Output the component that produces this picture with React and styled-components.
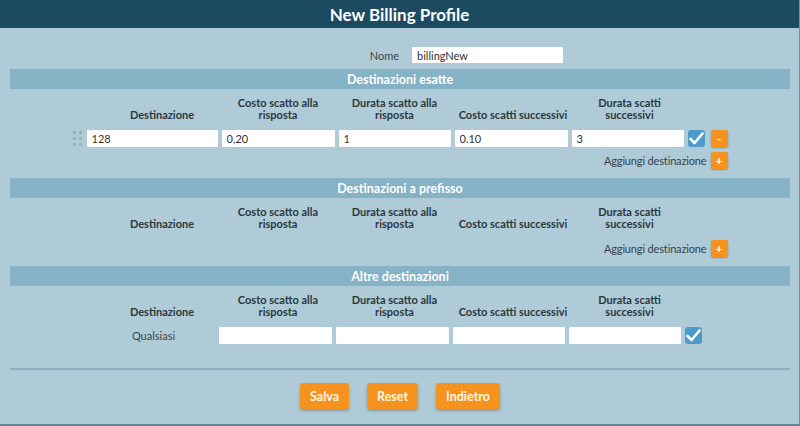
import React from "react";
import styled, { createGlobalStyle } from "styled-components";

const GlobalStyle = createGlobalStyle`
  html, body { margin: 0; padding: 0; }
  body { font-family: Lato, "Liberation Sans", sans-serif; }
  * { box-sizing: border-box; }
`;

const Page = styled.div`
  width: 800px;
  height: 426px;
  background: #afcbd7;
  border-right: 1px solid #6f93a4;
  border-bottom: 2px solid #5f8597;
  color: #2d3a40;
  font-size: 11px;
  overflow: hidden;
`;

const TitleBar = styled.div`
  height: 28px;
  background: #1b4a61;
  color: #fff;
  font-weight: 700;
  font-size: 17px;
  display: flex;
  align-items: center;
  justify-content: center;
`;

const Body = styled.div`
  padding: 0 9px 0 10px;
`;

const NameRow = styled.div`
  display: grid;
  grid-template-columns: 1fr 1fr;
  align-items: center;
  margin-top: 19px;
  height: 16px;
`;

const NameLabel = styled.label`
  text-align: right;
  padding-right: 1px;
  color: #3a464b;
`;

const TextInput = styled.input`
  width: ${(p) => p.$w || "100%"};
  height: ${(p) => p.$h || 17}px;
  margin-left: ${(p) => p.$ml || 0}px;
  border: none;
  outline: none;
  background: #fff;
  padding: 0 5px;
  font-family: inherit;
  font-size: 11px;
  color: #333;
  border-radius: 1px;
`;

const SectionBar = styled.div`
  height: 20px;
  margin-top: ${(p) => p.$mt}px;
  background: #85b2c5;
  color: #fff;
  font-weight: 700;
  font-size: 12.5px;
  display: flex;
  align-items: center;
  justify-content: center;
`;

const Table = styled.div`
  display: grid;
  grid-template-columns: 10px 131px 113px 112px 113px 112px 17px 19px;
  column-gap: 4px;
  justify-content: center;
`;

const HeadRow = styled.div`
  grid-column: 1 / -1;
  display: grid;
  grid-template-columns: subgrid;
  align-items: end;
  margin-top: 8px;
  height: 24px;
`;

const Th = styled.div`
  grid-column: ${(p) => p.$col};
  text-align: center;
  font-weight: 700;
  line-height: 12px;
  color: #2b383e;
  padding-left: ${(p) => p.$pl || 0}px;
`;

const DataRow = styled.div`
  grid-column: 1 / -1;
  display: grid;
  grid-template-columns: ${(p) => p.$cols || "subgrid"};
  column-gap: 4px;
  align-items: center;
  margin-top: ${(p) => p.$mt}px;
  height: 17px;
`;

const Handle = styled.div`
  display: grid;
  grid-template-columns: 3px 3px;
  grid-template-rows: 3px 3px 3px;
  gap: 3px 3px;
  justify-content: center;
  align-content: center;
  height: 17px;
  span {
    background: #8db4c6;
  }
`;

const Cell = styled.div`
  grid-column: ${(p) => p.$col};
  text-align: ${(p) => p.$align || "left"};
  padding-left: ${(p) => p.$pl || 0}px;
  color: #3a464b;
`;

const Check = styled.span`
  width: 17px;
  height: 17px;
  border-radius: 3px;
  background: #4c9bcb;
  display: flex;
  align-items: center;
  justify-content: center;
`;

const SmallBtn = styled.button`
  justify-self: end;
  width: 17px;
  height: 17px;
  border: none;
  border-radius: 2px;
  background: #f6931f;
  color: #fff;
  font-weight: 700;
  font-size: 12px;
  line-height: 17px;
  padding: 0;
  font-family: inherit;
  box-shadow: 0 1px 2px rgba(0, 0, 0, 0.25);
  display: flex;
  align-items: center;
  justify-content: center;
`;

const AddRow = styled.div`
  grid-column: 1 / -1;
  display: grid;
  grid-template-columns: subgrid;
  align-items: center;
  margin-top: ${(p) => p.$mt}px;
  height: 17px;
`;

const AddLabel = styled.div`
  grid-column: 1 / 8;
  text-align: right;
  margin-right: -2px;
  letter-spacing: -0.15px;
  color: #34424a;
`;

const Divider = styled.hr`
  border: none;
  height: 2px;
  background: #8cb0c1;
  margin: 24px 0 0 0;
`;

const Actions = styled.div`
  display: flex;
  justify-content: center;
  gap: 18px;
  margin-top: 13px;
`;

const ActionBtn = styled.button`
  height: 26px;
  padding: 0 10px;
  border: none;
  border-radius: 3px;
  background: #f6931f;
  color: #fff7e8;
  font-family: inherit;
  font-weight: 700;
  font-size: 12.5px;
  box-shadow: 0 2px 3px rgba(60, 60, 60, 0.35);
`;

const CheckIcon = () => (
  <svg width="15" height="13" viewBox="0 0 15 13">
    <path d="M1.5 7 L5.5 11 L13.5 1.5" stroke="#fff" strokeWidth="2.6" fill="none" strokeLinecap="round" strokeLinejoin="round" />
  </svg>
);

const Headers = () => (
  <HeadRow>
    <Th $col="2" $pl={20}>Destinazione</Th>
    <Th $col="3">Costo scatto alla<br />risposta</Th>
    <Th $col="4">Durata scatto alla<br />risposta</Th>
    <Th $col="5" $pl={4}>Costo scatti successivi</Th>
    <Th $col="6" $pl={4}>Durata scatti<br />successivi</Th>
  </HeadRow>
);

export default function App() {
  return (
    <Page>
      <GlobalStyle />
      <TitleBar>New Billing Profile</TitleBar>
      <Body>
        <NameRow>
          <NameLabel>Nome</NameLabel>
          <TextInput $w="151px" $h={16} $ml={12} defaultValue="billingNew" />
        </NameRow>

        <SectionBar $mt={6}>Destinazioni esatte</SectionBar>
        <Table>
          <Headers />
          <DataRow $mt={9}>
            <Handle>
              <span /><span /><span /><span /><span /><span />
            </Handle>
            <TextInput defaultValue="128" />
            <TextInput defaultValue="0,20" />
            <TextInput defaultValue="1" />
            <TextInput defaultValue="0.10" />
            <TextInput defaultValue="3" />
            <Check><CheckIcon /></Check>
            <SmallBtn>-</SmallBtn>
          </DataRow>
          <AddRow $mt={5}>
            <AddLabel>Aggiungi destinazione</AddLabel>
            <SmallBtn>+</SmallBtn>
          </AddRow>
        </Table>

        <SectionBar $mt={9}>Destinazioni a prefisso</SectionBar>
        <Table>
          <Headers />
          <AddRow $mt={10}>
            <AddLabel>Aggiungi destinazione</AddLabel>
            <SmallBtn>+</SmallBtn>
          </AddRow>
        </Table>

        <SectionBar $mt={9}>Altre destinazioni</SectionBar>
        <Table>
          <Headers />
          <DataRow $mt={9} $cols="10px 128px 113px 113px 112px 112px 17px">
            <Cell $col="2" $align="center" $pl={6}>Qualsiasi</Cell>
            <TextInput />
            <TextInput />
            <TextInput />
            <TextInput />
            <Check><CheckIcon /></Check>
          </DataRow>
        </Table>

        <Divider />
        <Actions>
          <ActionBtn>Salva</ActionBtn>
          <ActionBtn>Reset</ActionBtn>
          <ActionBtn>Indietro</ActionBtn>
        </Actions>
      </Body>
    </Page>
  );
}
